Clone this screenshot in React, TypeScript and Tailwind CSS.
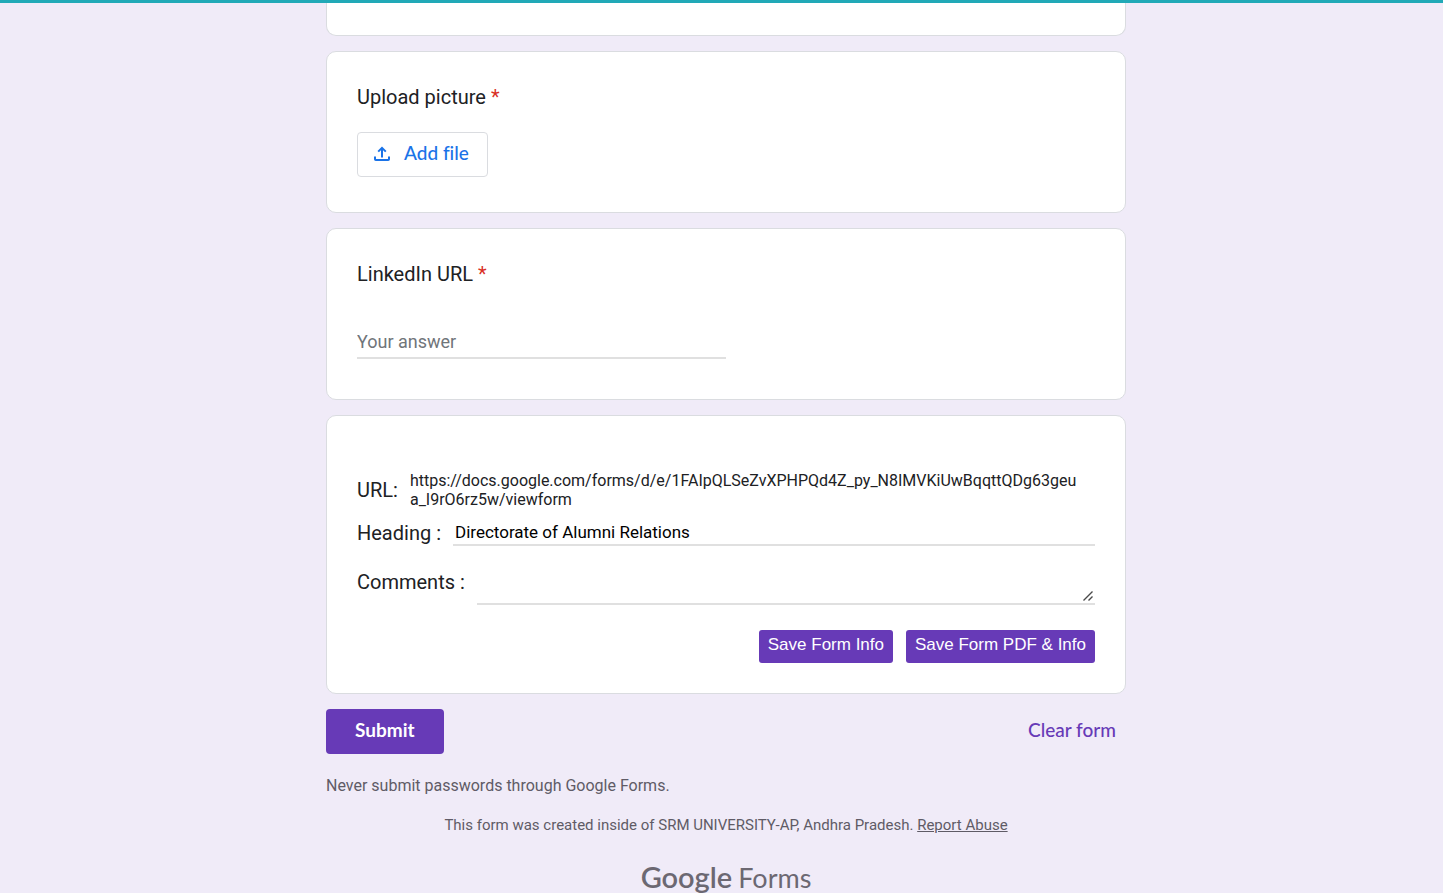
import React from "react";

function Card({ children, className }: { children?: React.ReactNode; className: string }) {
  return <section className={`rounded-[10px] border border-[#dadce0] bg-white px-[30px] ${className}`}>{children}</section>;
}

function Required() {
  return <span className="text-[#d93025]">*</span>;
}

function UploadIcon() {
  return (
    <svg viewBox="0 0 16 16" className="size-4" fill="none" stroke="currentColor" strokeWidth="2" aria-hidden="true">
      <path d="M8 11.5V2M4.2 5.6 8 1.8l3.8 3.8" />
      <path d="M1 10.5v2.7c0 .5.3.8.8.8h12.4c.5 0 .8-.3.8-.8v-2.7" />
    </svg>
  );
}

function ResizeGrip() {
  return (
    <svg
      viewBox="0 0 10 10"
      className="pointer-events-none absolute right-[2px] bottom-[2px] size-[10px]"
      fill="none"
      stroke="#4a4a4a"
      strokeWidth="1.4"
      aria-hidden="true"
    >
      <path d="M.5 9.5l9-9M5.5 9.5l4-4" />
    </svg>
  );
}

export default function App() {
  return (
    <div className="min-h-screen border-t-3 border-[#21a9b7] bg-[#f0ebf8] pl-[9px] font-['Roboto',sans-serif] text-[#202124]">
      <main className="mx-auto max-w-[800px]">
        <form className="flex flex-col gap-[15px]" onSubmit={(e) => e.preventDefault()}>
          <div className="h-[33px] rounded-b-[10px] border border-t-0 border-[#dadce0] bg-white" />

          <Card className="flex flex-col items-start gap-5 pt-[30px] pb-[35px]">
            <h2 className="text-[20px] leading-[30px]">
              Upload picture <Required />
            </h2>
            <button
              type="button"
              className="flex h-[45px] items-center gap-[14px] rounded border border-[#dadce0] pr-[18px] pb-[2px] pl-4 font-['Lato',sans-serif] text-[19px] font-medium text-[#1a73e8] [font-variant-ligatures:none]"
            >
              <UploadIcon />
              Add file
            </button>
          </Card>

          <Card className="flex flex-col items-start gap-[38px] pt-[30px] pb-10">
            <label htmlFor="linkedin" className="text-[20px] leading-[30px]">
              LinkedIn URL <Required />
            </label>
            <input
              id="linkedin"
              type="text"
              placeholder="Your answer"
              className="h-8 w-1/2 border-b-2 border-[#e0e0e0] pb-[2px] text-[18px] outline-none placeholder:text-[#70757a]"
            />
          </Card>

          <Card className="pt-[55px] pb-[30px]">
            <div className="flex items-center gap-3">
              <span className="text-[20px]">URL:</span>
              <p className="flex-1 pr-4 text-[16px] leading-[19px] break-all">
                https://docs.google.com/forms/d/e/1FAIpQLSeZvXPHPQd4Z_py_N8IMVKiUwBqqttQDg63geua_I9rO6rz5w/viewform
              </p>
            </div>
            <div className="mt-[9px] flex items-center gap-3">
              <label htmlFor="heading" className="text-[20px] leading-[30px]">
                Heading :
              </label>
              <input
                id="heading"
                type="text"
                defaultValue="Directorate of Alumni Relations"
                className="h-[26px] min-w-0 flex-1 border-b-2 border-[#e0e0e0] px-[2px] text-[17px] text-black outline-none"
              />
            </div>
            <div className="mt-[19px] flex items-start gap-3">
              <label htmlFor="comments" className="text-[20px] leading-[30px]">
                Comments :
              </label>
              <div className="relative flex min-w-0 flex-1 border-b-2 border-[#e0e0e0]">
                <textarea id="comments" className="h-9 w-full resize-none px-[2px] text-[17px] outline-none" />
                <ResizeGrip />
              </div>
            </div>
            <div className="mt-[25px] flex justify-end gap-[13px] font-['Liberation_Sans',sans-serif] text-[17px] leading-5 text-white">
              <button type="button" className="rounded-[3px] bg-[#673ab7] px-[9px] pt-[5px] pb-2">
                Save Form Info
              </button>
              <button type="button" className="rounded-[3px] bg-[#673ab7] px-[9px] pt-[5px] pb-2">
                Save Form PDF &amp; Info
              </button>
            </div>
          </Card>

          <div className="flex items-center justify-between font-['Lato',sans-serif] text-[19px]">
            <button type="submit" className="h-[45px] rounded bg-[#673ab7] px-[29px] pb-[2px] font-bold text-white">
              Submit
            </button>
            <button type="reset" className="h-[45px] px-[10px] pb-[2px] font-medium text-[#673ab7]">
              Clear form
            </button>
          </div>
        </form>

        <footer className="text-[15px] leading-5 text-[#5f5b66]">
          <p className="mt-[22px] text-[16px]">Never submit passwords through Google Forms.</p>
          <p className="mt-[19px] text-center">
            This form was created inside of SRM UNIVERSITY-AP, Andhra Pradesh.{" "}
            <a href="#report" className="underline">
              Report Abuse
            </a>
          </p>
          <p className="mt-[26px] flex items-baseline justify-center gap-[6px] font-['Lato',sans-serif] leading-8 text-[#6c6872]">
            <span className="text-[29px] font-semibold">Google</span>
            <span className="text-[27px]">Forms</span>
          </p>
        </footer>
      </main>
    </div>
  );
}
